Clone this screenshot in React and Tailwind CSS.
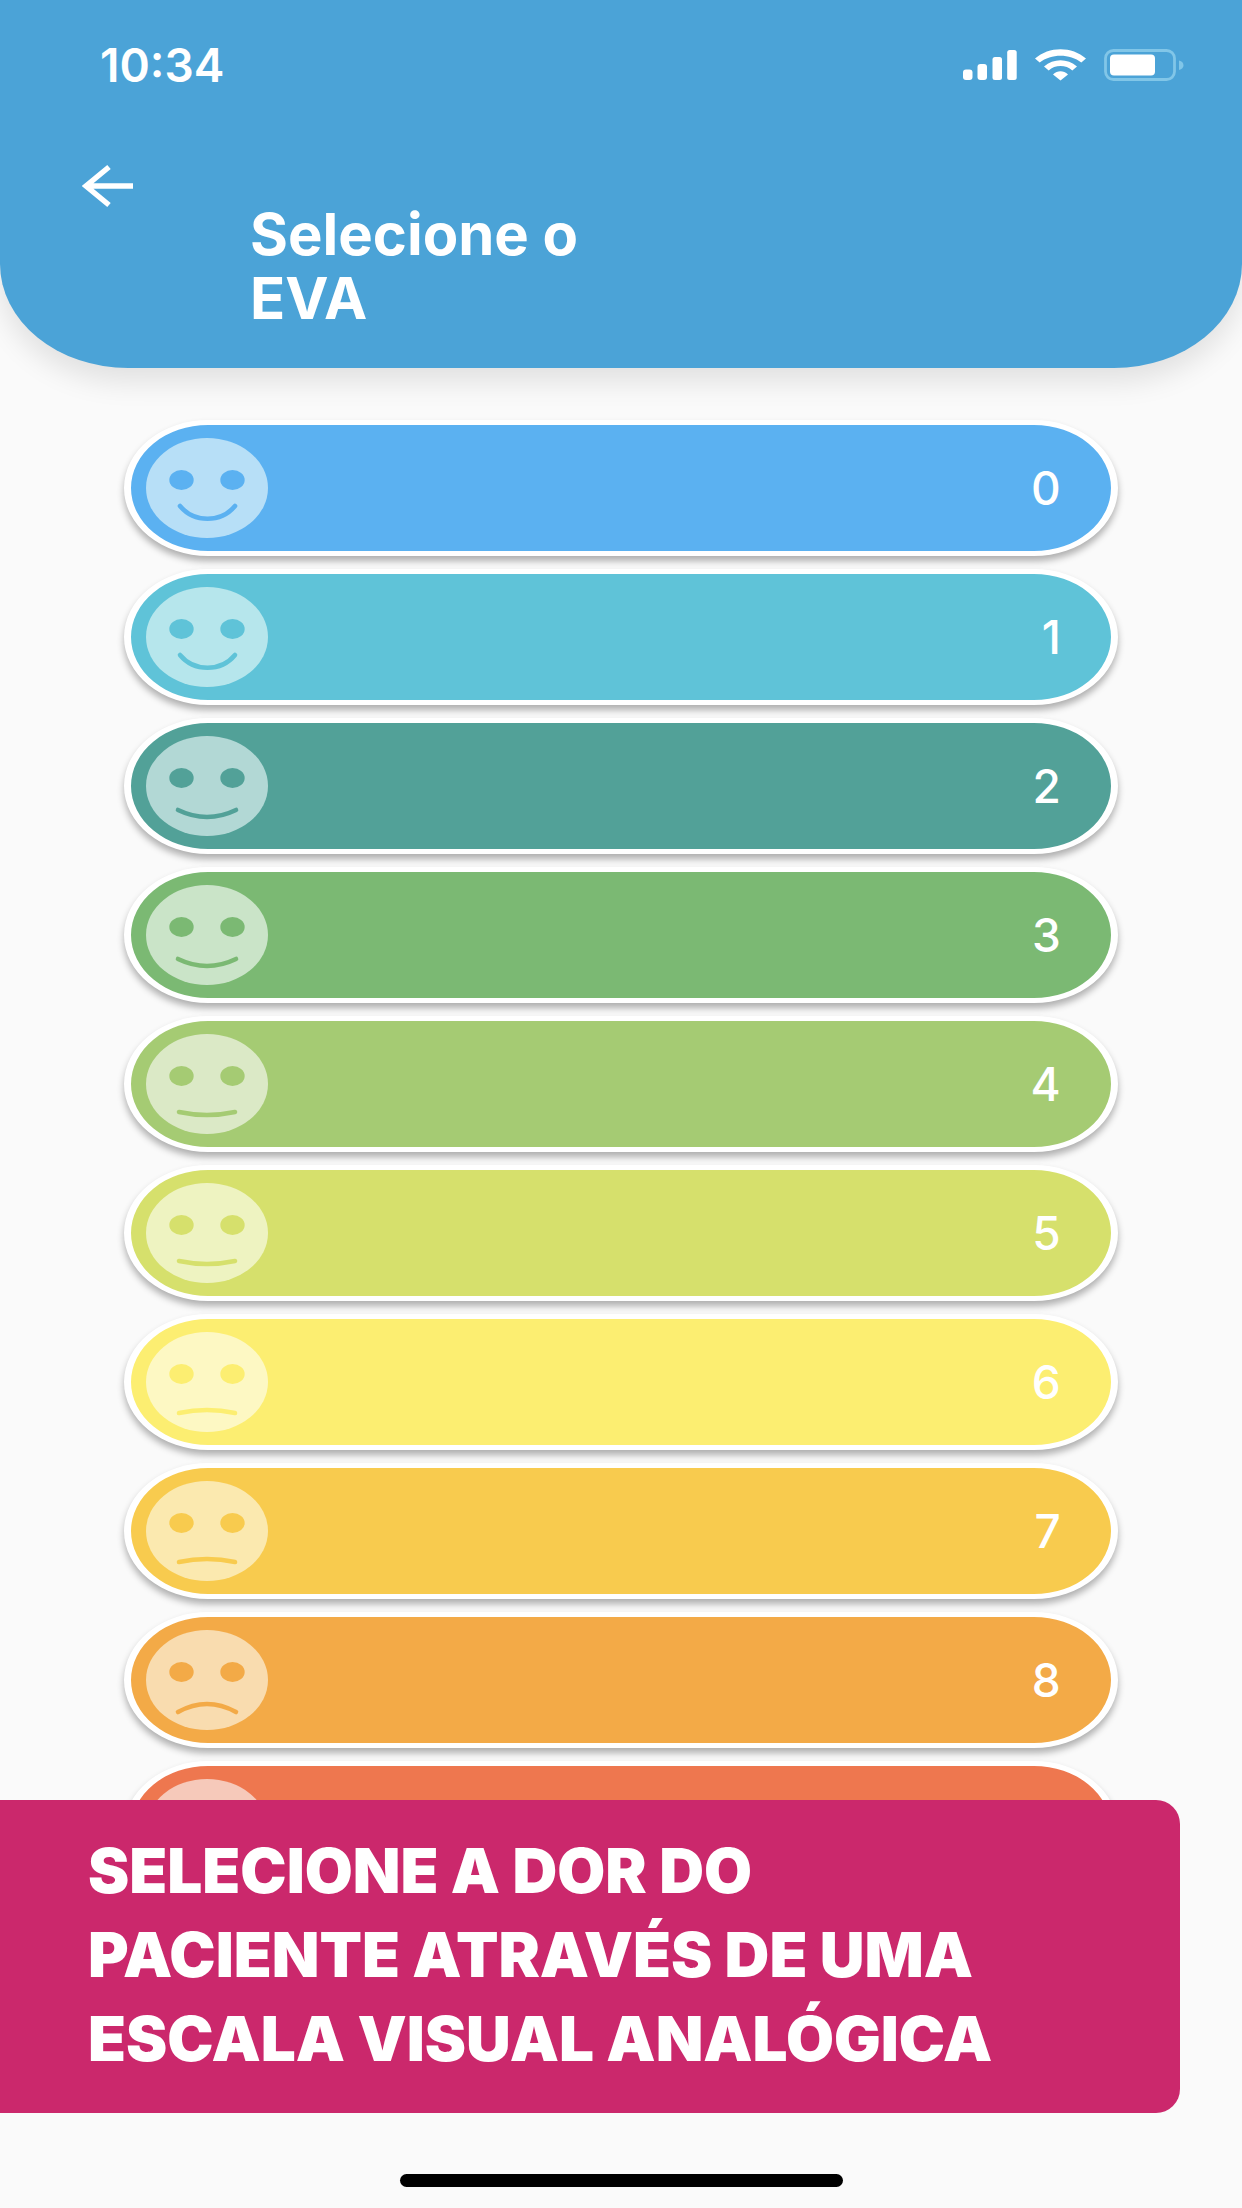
import React, { useState } from 'react';

const SMILE = 'M34 68 C48 85 75 85 89 68';
const SOFT_SMILE = 'M32 74 Q61 88 90 74';
const FLAT = 'M33 78 Q61 84 89 78';
const SOFT_FROWN = 'M33 81 Q61 75 89 81';
const FROWN = 'M32 82 Q61 66 90 82';

const levels = [
  { value: 0, color: '#5bb1f1', face: '#b7dff7', mouth: SMILE },
  { value: 1, color: '#5fc3d8', face: '#b6e6ec', mouth: SMILE },
  { value: 2, color: '#52a198', face: '#b2d8d5', mouth: SOFT_SMILE },
  { value: 3, color: '#7bb973', face: '#cae4c8', mouth: SOFT_SMILE },
  { value: 4, color: '#a5cb73', face: '#dbe9c6', mouth: FLAT },
  { value: 5, color: '#d6e06c', face: '#eef3c1', mouth: FLAT },
  { value: 6, color: '#fcee71', face: '#fdf8c3', mouth: SOFT_FROWN },
  { value: 7, color: '#f8cb4e', face: '#fbe9af', mouth: SOFT_FROWN },
  { value: 8, color: '#f3aa47', face: '#f9dcaf', mouth: FROWN },
  { value: 9, color: '#ee774f', face: '#f6c9ba', mouth: FROWN },
  { value: 10, color: '#e8503f', face: '#f4b5ae', mouth: FROWN },
];

function Face({ color, face, mouth }) {
  return (
    <svg width="122" height="100" viewBox="0 0 122 100" fill="none" aria-hidden="true">
      <ellipse cx="61" cy="50" rx="61" ry="50" fill={face} />
      <ellipse cx="35.5" cy="42" rx="12.2" ry="10" fill={color} />
      <ellipse cx="86.5" cy="42" rx="12.2" ry="10" fill={color} />
      <path d={mouth} stroke={color} strokeWidth="4.6" strokeLinecap="round" />
    </svg>
  );
}

function StatusBar() {
  return (
    <div className="flex items-center justify-between pl-[100px] pr-[57px] h-[130px]">
      <span className="text-[46px] leading-none font-semibold">10:34</span>
      <div className="flex items-center gap-[18px]">
        <svg width="55" height="32" viewBox="0 0 55 32" fill="currentColor" aria-hidden="true">
          <rect x="1" y="20.5" width="9.5" height="10.5" rx="3" />
          <rect x="15.5" y="15" width="9.5" height="16" rx="3" />
          <rect x="30.5" y="8" width="9.5" height="23" rx="2.5" />
          <rect x="45.2" y="1" width="9.5" height="30" rx="2.5" />
        </svg>
        <svg width="51" height="32" viewBox="0 0 51 32" fill="currentColor" aria-hidden="true">
          <path d="M0 9.5 C14 -3 37 -3 51 9.5 L46.3 13.5 C35 4.5 16 4.5 4.7 13.5 Z" />
          <path d="M9 17.5 C18.5 9 32.5 9 42 17.5 L37.3 21.5 C31 15.6 20 15.6 13.7 21.5 Z" />
          <path d="M18 25.5 C22.5 21.3 28.5 21.3 33 25.5 L25.5 31.5 Z" />
        </svg>
        <svg width="81" height="32" viewBox="0 0 81 32" fill="none" aria-hidden="true">
          <rect x="1.5" y="1.5" width="69" height="29" rx="8" stroke="#81c6e8" strokeWidth="2.8" />
          <rect x="6" y="5.5" width="45" height="21" rx="4" fill="currentColor" />
          <path d="M75 11.5 C81 12.5 81 20 75 21 Z" fill="#81c6e8" />
        </svg>
      </div>
    </div>
  );
}

function Header() {
  return (
    <header className="relative z-10 shrink-0 bg-[#4ba3d7] text-white rounded-b-[128px_104px] shadow-[0_14px_28px_rgba(0,0,0,0.1)]">
      <StatusBar />
      <div className="flex items-start pl-[82px] pb-[38px]">
        <button type="button" aria-label="Voltar" className="mt-[34px] w-[168px]">
          <svg width="52" height="44" viewBox="0 0 52 44" fill="none" stroke="currentColor" strokeWidth="5.4" aria-hidden="true">
            <path d="M51 22 H4 M27 3 L4 22 L27 41" />
          </svg>
        </button>
        <h1 className="mt-[72px] text-[58px] leading-[64px] font-bold">
          Selecione o
          <br />
          EVA
        </h1>
      </div>
    </header>
  );
}

function App() {
  const [selected, setSelected] = useState(null);

  return (
    <div className="relative flex flex-col h-screen overflow-hidden bg-[#fafafa] font-['Inter',sans-serif]">
      <Header />

      <main className="flex-1 min-h-0 overflow-y-auto [scrollbar-width:none] pt-[52px]">
        <ul className="w-4/5 mx-auto flex flex-col gap-[13px]">
          {levels.map((level) => (
            <li key={level.value}>
              <button
                type="button"
                aria-pressed={selected === level.value}
                onClick={() => setSelected(level.value)}
                style={{ backgroundColor: level.color }}
                className="flex items-center justify-between w-full h-[136px] pl-[15px] pr-[50px] border-x-[7px] border-y-[5px] border-white rounded-[84px_/_68px] shadow-[0_5px_7px_rgba(0,0,0,0.3)] text-white text-[46px] leading-none font-medium"
              >
                <Face color={level.color} face={level.face} mouth={level.mouth} />
                <span>{level.value}</span>
              </button>
            </li>
          ))}
        </ul>
      </main>

      {/* hint and home indicator stay over the list */}
      <div className="absolute inset-x-0 bottom-0 z-20 flex flex-col">
        <p className="w-[95%] bg-[#cb286c] text-white text-[62px] leading-[84px] font-black pl-[88px] pt-[29px] pb-8 rounded-r-[24px]">
          SELECIONE A DOR DO
          <br />
          PACIENTE ATRAVÉS DE UMA
          <br />
          ESCALA VISUAL ANALÓGICA
        </p>
        <div className="flex justify-center bg-[#fafafa] pt-[61px] pb-[21px]">
          <div className="w-[443px] h-[13px] rounded-full bg-black" />
        </div>
      </div>
    </div>
  );
}

export default App;
